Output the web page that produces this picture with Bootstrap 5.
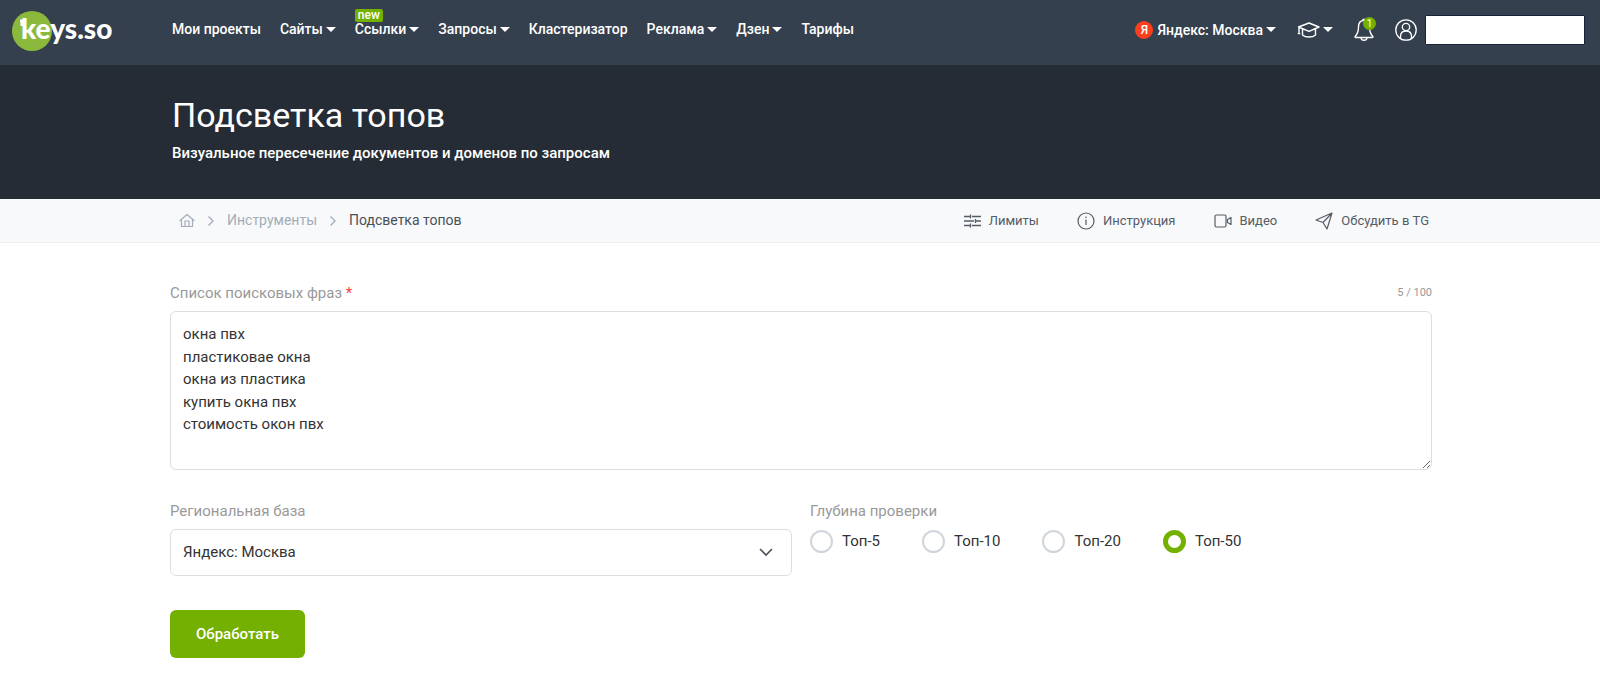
<!DOCTYPE html>
<html lang="ru">
<head>
<meta charset="utf-8">
<meta name="viewport" content="width=device-width, initial-scale=1">
<title>Подсветка топов — keys.so</title>
<link href="https://cdn.jsdelivr.net/npm/bootstrap@5.3.0/dist/css/bootstrap.min.css" rel="stylesheet">
<style>
  body { font-family: Roboto, "Liberation Sans", sans-serif; font-size: 15px; color: #333; background: #fff; }
  .wrap { max-width: 1286px; padding: 0 11px 0 13px; }
  svg { flex: none; }

  .topbar { background: #35404e; height: 65px; padding: 0 15px 0 12px; }
  .topbar .brand { width: 160px; }
  .topbar .menu { padding-bottom: 7px; gap: 19px; }
  .topbar .tools { padding-bottom: 6px; gap: 21px; }
  .bar-link { color: #fff; font-size: 14px; font-weight: 500; line-height: 24px; text-decoration: none; background: none; border: 0; padding: 0; white-space: nowrap; }
  .bar-link.dropdown-toggle::after { margin-left: 3px; vertical-align: 2px; border-top-width: 5px; border-left-width: 5px; border-right-width: 5px; }
  .new-tag { left: 0; top: -8px; background: #74b000; color: #fff; font-size: 12px; line-height: 13px; padding: 0 3px; border-radius: 2px; font-weight: 500; }
  .ya { width: 18px; height: 18px; border-radius: 50%; background: #fc3f1d; font-size: 12px; line-height: 18px; text-align: center; }
  .count { right: -2px; top: -1px; width: 13px; height: 13px; border-radius: 50%; background: #74b000; color: #fff; font-size: 10px; line-height: 13px; text-align: center; }
  .user-field { width: 160px; height: 30px; background: #fff; border: 1px solid #14253a; border-radius: 1px; }

  .hero { background: #252c35; color: #fff; height: 134px; padding-top: 28px; }
  .hero h1 { font-size: 34px; line-height: 44px; font-weight: 400; margin: 0 0 4px; padding-left: 2px; }
  .hero p { font-size: 15px; line-height: 24px; font-weight: 500; margin: 0; padding-left: 2px; }

  .subbar { background: #f7f9fb; border-bottom: 1px solid #ebeef0; }
  .subbar .wrap { height: 43px; }
  .crumbs { gap: 12px; padding-left: 9px; color: #4a5058; font-size: 14px; }
  .crumbs a { color: #a3adba; text-decoration: none; }
  .quick { gap: 38px; padding-right: 3px; }
  .quick a { color: #555c66; font-size: 13px; text-decoration: none; gap: 8px; }

  .cap { color: #999; font-size: 15px; line-height: 24px; margin-bottom: 6px; display: block; float: none; width: auto; padding: 0; }
  .req { color: #f44; }
  .num { color: #999; font-size: 11px; line-height: 24px; }
  .entry { padding-top: 38px; }
  .options { margin-top: 29px; }
  .form-control.phrases { height: 159px; padding: 11px 12px; font-size: 15px; border-color: #dcdee3; border-radius: 6px; color: #333; }
  .form-select.region { height: 47px; padding: 0 40px 0 12px; font-size: 15px; border-color: #dcdee3; border-radius: 6px; color: #333; background-image: none; }
  .chev { right: 19px; top: 19px; pointer-events: none; }
  .half { --bs-gutter-x: 18px; }
  .depth { gap: 42px; }
  .depth label { gap: 9px; line-height: 24px; }
  .form-check-input.dot { width: 23px; height: 23px; margin: 0; border: 2px solid #d0d5dc; float: none; }
  .form-check-input.dot:checked { border: 5px solid #74b000; background: #fff none; }
  .send { background: #74b000; color: #fff; font-size: 15px; font-weight: 500; height: 48px; width: 135px; border-radius: 6px; border: 0; margin-top: 34px; }
  .send:hover { background: #659900; color: #fff; }
</style>
</head>
<body>
<header class="topbar d-flex align-items-center">
  <a class="brand d-block" href="#" aria-label="keys.so">
    <svg width="106" height="46" viewBox="0 0 106 46" class="d-block">
      <circle cx="20" cy="21" r="20" fill="#8bb93c"/>
      <path d="M8 11h6M10 11v5" stroke="#fff" stroke-width="3"/>
      <text x="9" y="29" font-family="Lato, sans-serif" font-weight="900" font-size="28" fill="#fff">keys.so</text>
    </svg>
  </a>
  <nav class="menu d-flex align-items-center">
    <a class="bar-link" href="#">Мои проекты</a>
    <button type="button" class="bar-link dropdown-toggle">Сайты</button>
    <div class="position-relative"><button type="button" class="bar-link dropdown-toggle">Ссылки</button><span class="new-tag position-absolute">new</span></div>
    <button type="button" class="bar-link dropdown-toggle">Запросы</button>
    <a class="bar-link" href="#">Кластеризатор</a>
    <button type="button" class="bar-link dropdown-toggle">Реклама</button>
    <button type="button" class="bar-link dropdown-toggle">Дзен</button>
    <a class="bar-link" href="#">Тарифы</a>
  </nav>
  <div class="tools d-flex align-items-center ms-auto">
    <button type="button" class="bar-link dropdown-toggle d-flex align-items-center"><span class="ya me-1">Я</span>Яндекс: Москва</button>
    <button type="button" class="bar-link dropdown-toggle d-flex align-items-center" aria-label="Обучение">
      <svg width="23" height="18" viewBox="0 0 23 18" fill="none" stroke="#fff" stroke-width="1.400" stroke-linejoin="round" stroke-linecap="round"><path d="M1.500 6 12 2l10 4-10 4.300zM5.500 8v6c3 2.700 10 2.700 13 0V8M2 7v5M1.300 12.500h1.400"/></svg>
    </button>
    <a href="#" class="position-relative d-block" aria-label="Уведомления">
      <svg class="d-block" width="20" height="24" viewBox="0 0 20 24" fill="none" stroke="#fff" stroke-width="1.400" stroke-linejoin="round" stroke-linecap="round"><path d="M10 2.500C6 2.500 4.500 5.500 4.500 9c0 5-1.500 7.500-3.300 9.500-.4.600-.1 1 .6 1h16.400c.7 0 1-.4.600-1C17 16.500 15.500 14 15.500 9c0-3.500-1.500-6.500-5.500-6.500ZM7 20c.5 3 5.500 3 6 0M9 2.300V1.500h2v.8"/></svg>
      <span class="count position-absolute">1</span>
    </a>
    <div class="d-flex align-items-center gap-2">
      <a href="#" class="d-block" aria-label="Профиль">
        <svg class="d-block" width="22" height="22" viewBox="0 0 22 22" fill="none" stroke="#fff" stroke-width="1.300"><circle cx="11" cy="11" r="10.200"/><circle cx="11" cy="8" r="3.700"/><path d="M5.500 19.500v-2c0-3.500 2-5.500 5.500-5.500s5.500 2 5.500 5.500v2"/></svg>
      </a>
      <input class="user-field" type="text" aria-label="Пользователь">
    </div>
  </div>
</header>

<section class="hero">
  <div class="container-fluid wrap">
    <h1>Подсветка топов</h1>
    <p>Визуальное пересечение документов и доменов по запросам</p>
  </div>
</section>

<div class="subbar">
  <div class="container-fluid wrap d-flex align-items-center justify-content-between">
    <nav class="crumbs d-flex align-items-center" aria-label="Навигация">
      <a href="#" class="d-flex" aria-label="Главная"><svg width="16" height="16" viewBox="0 0 16 16" fill="none" stroke="#a3adba" stroke-width="1.200" stroke-linejoin="round" stroke-linecap="round"><path d="M1 7.500 8 1.500l7 6M2.500 6.500v7h11v-7M6 13.500V8h4v5.500"/></svg></a>
      <svg width="8" height="12" viewBox="0 0 8 12" fill="none" stroke="#a3adba" stroke-width="1.300"><path d="m1.500 1.500 4.500 4.500-4.500 4.500"/></svg>
      <a href="#">Инструменты</a>
      <svg width="8" height="12" viewBox="0 0 8 12" fill="none" stroke="#a3adba" stroke-width="1.300"><path d="m1.500 1.500 4.500 4.500-4.500 4.500"/></svg>
      <span>Подсветка топов</span>
    </nav>
    <div class="quick d-flex align-items-center">
      <a href="#" class="d-flex align-items-center"><svg width="17" height="16" viewBox="0 0 17 16" fill="none" stroke="#555c66" stroke-width="1.300"><path d="M0 3.500h6m2 0h9M0 8h10m2 0h5M0 12.500h6m2 0h9M6.500 1.500v4M11.500 6v4M6.500 10.500v4"/></svg>Лимиты</a>
      <a href="#" class="d-flex align-items-center"><svg width="18" height="18" viewBox="0 0 18 18" fill="none" stroke="#555c66" stroke-width="1.200"><circle cx="9" cy="9" r="8"/><path d="M9 7.500v5.500M9 4.500V6"/></svg>Инструкция</a>
      <a href="#" class="d-flex align-items-center"><svg width="18" height="16" viewBox="0 0 18 16" fill="none" stroke="#555c66" stroke-width="1.200" stroke-linejoin="round"><rect x="1" y="2" width="11" height="12" rx="1.500"/><path d="m13.500 6.500 3.500-2v7l-3.500-2z"/></svg>Видео</a>
      <a href="#" class="d-flex align-items-center"><svg width="18" height="18" viewBox="0 0 18 18" fill="none" stroke="#555c66" stroke-width="1.200" stroke-linejoin="round"><path d="M1 8 17 1l-5 16-4-6.500zM8 10.500 17 1"/></svg>Обсудить в TG</a>
    </div>
  </div>
</div>

<main class="container-fluid wrap">
  <form class="entry">
    <div class="d-flex justify-content-between">
      <label class="cap" for="phrases">Список поисковых фраз <span class="req">*</span></label>
      <span class="num">5 / 100</span>
    </div>
    <textarea id="phrases" class="form-control phrases" spellcheck="false">окна пвх
пластиковае окна
окна из пластика
купить окна пвх
стоимость окон пвх</textarea>

    <div class="row half options">
      <div class="col-6">
        <label class="cap" for="region">Региональная база</label>
        <div class="position-relative">
          <select id="region" class="form-select region"><option>Яндекс: Москва</option></select>
          <svg class="chev position-absolute" width="14" height="9" viewBox="0 0 14 9" fill="none" stroke="#4a5360" stroke-width="1.600"><path d="m1 1 6 6 6-6"/></svg>
        </div>
      </div>
      <fieldset class="col-6">
        <legend class="cap">Глубина проверки</legend>
        <div class="depth d-flex">
          <label class="d-flex align-items-center"><input class="form-check-input dot" type="radio" name="depth">Топ-5</label>
          <label class="d-flex align-items-center"><input class="form-check-input dot" type="radio" name="depth">Топ-10</label>
          <label class="d-flex align-items-center"><input class="form-check-input dot" type="radio" name="depth">Топ-20</label>
          <label class="d-flex align-items-center"><input class="form-check-input dot" type="radio" name="depth" checked>Топ-50</label>
        </div>
      </fieldset>
    </div>
    <button type="submit" class="btn send">Обработать</button>
  </form>
</main>
<script src="https://cdn.jsdelivr.net/npm/bootstrap@5.3.0/dist/js/bootstrap.bundle.min.js"></script>
</body>
</html>
